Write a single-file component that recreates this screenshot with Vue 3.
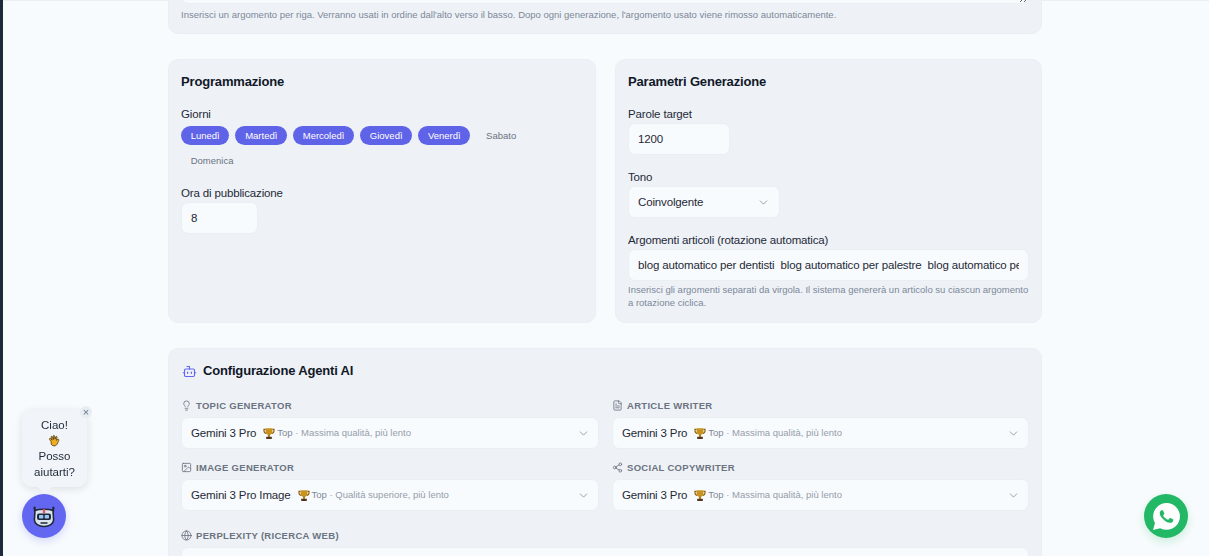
<script setup>
const days = [
  { n: 'Lunedì', on: true }, { n: 'Martedì', on: true }, { n: 'Mercoledì', on: true },
  { n: 'Giovedì', on: true }, { n: 'Venerdì', on: true }, { n: 'Sabato', on: false }, { n: 'Domenica', on: false }
]
const agents = [
  { label: 'TOPIC GENERATOR', icon: 'bulb', model: 'Gemini 3 Pro', note: 'Massima qualità, più lento' },
  { label: 'ARTICLE WRITER', icon: 'file', model: 'Gemini 3 Pro', note: 'Massima qualità, più lento' },
  { label: 'IMAGE GENERATOR', icon: 'image', model: 'Gemini 3 Pro Image', note: 'Qualità superiore, più lento' },
  { label: 'SOCIAL COPYWRITER', icon: 'share', model: 'Gemini 3 Pro', note: 'Massima qualità, più lento' }
]
const topics = 'blog automatico per dentisti  blog automatico per palestre  blog automatico per ristoranti  blog automatico per hotel'
</script>

<template>
  <div class="page">
    <div class="rail"></div>
    <main class="main">
      <div class="content">
        <section class="card top-card">
          <textarea class="area" readonly></textarea>
          <p class="hint top-hint">Inserisci un argomento per riga. Verranno usati in ordine dall'alto verso il basso. Dopo ogni generazione, l'argomento usato viene rimosso automaticamente.</p>
        </section>

        <div class="two">
          <section class="card sched">
            <h3 class="title">Programmazione</h3>
            <div class="label first">Giorni</div>
            <div class="pills">
              <span v-for="d in days" :key="d.n" class="pill" :class="{ on: d.on }">{{ d.n }}</span>
            </div>
            <div class="label ora">Ora di pubblicazione</div>
            <input class="field w-ora" value="8" readonly />
          </section>

          <section class="card params">
            <h3 class="title">Parametri Generazione</h3>
            <div class="label first">Parole target</div>
            <input class="field w-parole" value="1200" readonly />
            <div class="label gapped">Tono</div>
            <div class="field select w-tono">
              <span>Coinvolgente</span>
              <svg class="chev" viewBox="0 0 24 24"><path d="m6 9 6 6 6-6" /></svg>
            </div>
            <div class="label gapped">Argomenti articoli (rotazione automatica)</div>
            <input class="field wide" :value="topics" readonly />
            <p class="hint arg-hint">Inserisci gli argomenti separati da virgola. Il sistema genererà un articolo su ciascun argomento a rotazione ciclica.</p>
          </section>
        </div>

        <section class="card agents">
          <h3 class="title agent-title">
            <svg class="bot" viewBox="0 0 24 24"><path d="M12 8V4H8" /><rect width="16" height="12" x="4" y="8" rx="2" /><path d="M2 14h2" /><path d="M20 14h2" /><path d="M15 13v2" /><path d="M9 13v2" /></svg>
            Configurazione Agenti AI
          </h3>
          <div class="agent-grid">
            <div v-for="a in agents" :key="a.label" class="agent">
              <div class="agent-label">
                <svg class="ic" viewBox="0 0 24 24">
                  <template v-if="a.icon === 'bulb'"><path d="M15 14c.2-1 .7-1.7 1.5-2.5 1-.9 1.5-2.2 1.5-3.5A6 6 0 0 0 6 8c0 1 .2 2.2 1.5 3.5.7.7 1.3 1.5 1.5 2.5" /><path d="M9 18h6" /><path d="M10 22h4" /></template>
                  <template v-else-if="a.icon === 'file'"><path d="M15 2H6a2 2 0 0 0-2 2v16a2 2 0 0 0 2 2h12a2 2 0 0 0 2-2V7Z" /><path d="M14 2v4a2 2 0 0 0 2 2h4" /><path d="M10 9H8" /><path d="M16 13H8" /><path d="M16 17H8" /></template>
                  <template v-else-if="a.icon === 'image'"><rect width="18" height="18" x="3" y="3" rx="2" /><circle cx="9" cy="9" r="2" /><path d="m21 15-3.086-3.086a2 2 0 0 0-2.828 0L6 21" /></template>
                  <template v-else><circle cx="18" cy="5" r="3" /><circle cx="6" cy="12" r="3" /><circle cx="18" cy="19" r="3" /><path d="M8.59 13.51 15.42 17.49" /><path d="M15.41 6.51 8.59 10.49" /></template>
                </svg>
                {{ a.label }}
              </div>
              <div class="field select">
                <span class="model">
                  <span class="model-name">{{ a.model }}</span>
                  <svg class="trophy" viewBox="0 0 16 16">
                    <path d="M3.500 2.500H1.300v1.800c0 1.900 1.500 3.400 3.500 3.500M12.500 2.500h2.200v1.800c0 1.900-1.500 3.400-3.500 3.500" fill="none" stroke="#8a5a12" stroke-width="1.500" />
                    <path d="M3.400 1h9.200v4.400c0 2.800-2 4.600-4.600 4.600S3.400 8.200 3.400 5.400Z" fill="#c9941c" />
                    <rect x="6.800" y="9.500" width="2.400" height="3" fill="#9a6c12" />
                    <rect x="4.200" y="12.200" width="7.600" height="3" rx=".5" fill="#54361a" />
                  </svg>
                  <span class="note"><span class="top">Top</span> · {{ a.note }}</span>
                </span>
                <svg class="chev" viewBox="0 0 24 24"><path d="m6 9 6 6 6-6" /></svg>
              </div>
            </div>
          </div>
          <div class="agent-label perplexity">
            <svg class="ic" viewBox="0 0 24 24"><circle cx="12" cy="12" r="10" /><path d="M12 2a14.500 14.500 0 0 0 0 20 14.500 14.500 0 0 0 0-20" /><path d="M2 12h20" /></svg>
            PERPLEXITY (RICERCA WEB)
          </div>
          <div class="field select"></div>
        </section>
      </div>
    </main>

    <div class="chat">
      <div class="bubble">
        <button class="close">×</button>
        Ciao!<br />
        <svg class="wave" viewBox="0 0 16 16">
          <path d="M3.600 8.800 1.800 6.200c-.6-.9.6-1.800 1.300-.9L4.800 7 3.600 3.800c-.4-1.100 1.100-1.600 1.500-.5l1.200 2.900-.3-3.700c-.1-1.100 1.500-1.200 1.600-.1l.5 3.500.8-2.600c.4-1 1.800-.6 1.500.5l-.8 3.400 1.500-1c.9-.6 1.800.4 1.200 1.300-1 1.500-1 3.300-2.400 4.800-1.800 2-4.800 1.600-6.300-.7Z" fill="#efae1f" stroke="#4a3312" stroke-width=".9" />
        </svg><br />
        Posso<br />aiutarti?
      </div>
      <div class="avatar">
        <svg class="robot" viewBox="0 0 24 24">
          <path d="M2.500 3.500 3.500 10M21.500 3.500 20.500 10" stroke="#1e293b" stroke-width="2.200" stroke-linecap="round" fill="none" />
          <path d="M3 6.500C7 4.800 17 4.800 21 6.500l.6 9.500c0 3.500-4.300 6.500-9.600 6.500S2.400 19.500 2.400 16Z" fill="#dbe3ee" stroke="#1e293b" stroke-width="1.600" />
          <rect x="10.800" y="5.200" width="2.400" height="4" fill="#e25563" />
          <rect x="5" y="9.500" width="14" height="6.500" rx="2" fill="#1e293b" />
          <rect x="7" y="11" width="4.300" height="3.500" rx=".8" fill="#9cc4f5" />
          <rect x="12.700" y="11" width="4.300" height="3.500" rx=".8" fill="#9cc4f5" />
          <path d="M8.500 19h7" stroke="#1e293b" stroke-width="1.500" />
        </svg>
      </div>
    </div>

    <div class="wa">
      <svg viewBox="0 0 24 24">
        <path fill="#fff" d="M20.464 3.488A11.815 11.815 0 0 0 12.050 0C5.495 0 .16 5.335.157 11.892c0 2.096.547 4.142 1.588 5.945L.057 24l6.305-1.654a11.882 11.882 0 0 0 5.683 1.448h.005c6.554 0 11.890-5.335 11.893-11.893a11.821 11.821 0 0 0-3.480-8.413z" />
        <path fill="#22b865" d="M17.472 14.382c-.297-.149-1.758-.867-2.030-.967-.273-.099-.471-.148-.67.150-.197.297-.767.966-.94 1.164-.173.199-.347.223-.644.075-.297-.150-1.255-.463-2.390-1.475-.883-.788-1.480-1.761-1.653-2.059-.173-.297-.018-.458.130-.606.134-.133.298-.347.446-.520.149-.174.198-.298.298-.497.099-.198.050-.371-.025-.520-.075-.149-.669-1.612-.916-2.207-.242-.579-.487-.500-.669-.510-.173-.008-.371-.010-.570-.010-.198 0-.520.074-.792.372-.272.297-1.040 1.016-1.040 2.479 0 1.462 1.065 2.875 1.213 3.074.149.198 2.096 3.200 5.077 4.487.709.306 1.262.489 1.694.625.712.227 1.360.195 1.871.118.571-.085 1.758-.719 2.006-1.413.248-.694.248-1.289.173-1.413-.074-.124-.272-.198-.570-.347" />
      </svg>
    </div>
  </div>
</template>

<style>
html, body { margin: 0; height: 100%; overflow: hidden; background: #f8fbfd; }
</style>

<style scoped>
.page {
  display: flex;
  height: 556px;
  overflow: hidden;
  background: #f8fbfd;
  font-family: "Liberation Sans", Arial, sans-serif;
  color: #111827;
}
.rail { width: 3px; flex: none; background: #1e293b; }
.main { flex: 1; min-width: 0; border-top: 1px solid #eceff2; box-sizing: border-box; }
.content { width: 874px; margin: -61px 0 0 165px; display: flex; flex-direction: column; }

.card {
  background: #eef2f7;
  border: 1px solid #ebeff5;
  border-radius: 10px;
  box-sizing: border-box;
  padding: 12px;
}
.top-card { height: 94px; }
.area {
  display: block;
  width: 100%;
  height: 51px;
  box-sizing: border-box;
  border: 1px solid #eaeff4;
  border-radius: 7px;
  background: #f8fbfd;
  outline: none;
  margin: 0;
}
.hint { margin: 0; font-size: 9.5px; line-height: 13px; color: #7c8797; }
.top-hint { margin-top: 4px; }

.two { display: grid; grid-template-columns: 428px 427px; gap: 19px; margin-top: 25px; }
.sched, .params { height: 264px; }
.title { margin: 1px 0 0; font-size: 13px; line-height: 18px; font-weight: 700; letter-spacing: -.17px; color: #111827; }
.label { font-size: 11.5px; line-height: 14px; letter-spacing: -.15px; color: #1f2937; }
.first { margin-top: 16px; }
.pills { display: flex; flex-wrap: wrap; gap: 6px; margin-top: 5px; }
.pill {
  height: 19px;
  line-height: 19px;
  padding: 0 9.7px;
  border-radius: 10px;
  font-size: 9.5px;
  color: #6b7280;
}
.pill.on { background: #5f63e8; color: #fff; }
.ora { margin-top: 16px; }
.ora + .field { margin-top: 2px; }

.field {
  display: block;
  height: 32px;
  box-sizing: border-box;
  margin-top: 2px;
  padding: 0 9px;
  border: 1px solid #eaeff4;
  border-radius: 7px;
  background: #f8fbfd;
  font-family: inherit;
  font-size: 11.5px;
  letter-spacing: -.15px;
  line-height: 30px;
  color: #1f2937;
  outline: none;
}
.w-ora { width: 77px; }
.w-parole { width: 102px; }
.w-tono { width: 152px; }
.wide { width: 401px; }
.gapped { margin-top: 15px; }
.select { display: flex; align-items: center; justify-content: space-between; padding: 0 8px 0 9px; width: auto; }
.w-tono.select { width: 152px; padding-right: 9px; }
.chev { width: 13px; height: 13px; fill: none; stroke: #828c9a; stroke-width: 1.500; stroke-linecap: round; stroke-linejoin: round; }
.arg-hint { margin-top: 2px; }

.agents { margin-top: 25px; height: 240px; }
.agent-title { display: flex; align-items: center; gap: 6px; margin: 1px 0 0 1px; }
.bot { width: 15px; height: 15px; fill: none; stroke: #6366f1; stroke-width: 1.800; stroke-linecap: round; stroke-linejoin: round; }
.agent-grid { display: grid; grid-template-columns: 418px 417px; column-gap: 13px; row-gap: 11px; margin-top: 18px; }
.agent-label {
  display: flex;
  align-items: center;
  gap: 4px;
  height: 14px;
  font-size: 9.5px;
  font-weight: 700;
  letter-spacing: .3px;
  color: #6b7280;
}
.agent .field { margin-top: 5px; }
.ic { width: 11px; height: 11px; flex: none; fill: none; stroke: #6b7280; stroke-width: 1.800; stroke-linecap: round; stroke-linejoin: round; }
.model { display: flex; align-items: center; }
.model-name { font-size: 11.5px; color: #1f2937; }
.trophy { width: 12px; height: 13px; margin-left: 7px; margin-right: 2px; }
.note { font-size: 9.5px; letter-spacing: 0; color: #949daa; }
.top { color: #7f8997; }
.perplexity { margin-top: 17px; }
.perplexity + .field { margin-top: 5px; }

.chat { position: fixed; left: 22px; top: 410px; width: 66px; display: flex; flex-direction: column; }
.bubble {
  position: relative;
  box-sizing: border-box;
  width: 65px;
  height: 77px;
  padding: 8px 4px;
  background: #f1f5f9;
  border-radius: 10px;
  box-shadow: 0 2px 8px rgba(15, 23, 42, .12);
  font-size: 11.5px;
  line-height: 15.700px;
  text-align: center;
  color: #1f2937;
}
.bubble::after {
  content: "";
  position: absolute;
  left: 18px;
  bottom: -5px;
  width: 10px;
  height: 10px;
  background: #f1f5f9;
  transform: rotate(45deg);
}
.close {
  position: absolute;
  right: -5px;
  top: -4px;
  width: 12px;
  height: 12px;
  padding: 0;
  border: 0;
  border-radius: 50%;
  background: #e7edf3;
  color: #64748b;
  font: 11px/12px "Liberation Sans", sans-serif;
}
.wave { width: 14px; height: 14px; vertical-align: -3px; }
.avatar {
  width: 44px;
  height: 44px;
  margin-top: 7px;
  border-radius: 50%;
  background: #6366f1;
  box-shadow: 0 3px 8px rgba(99, 102, 241, .25);
  display: flex;
  align-items: center;
  justify-content: center;
}
.robot { width: 24px; height: 24px; }
.wa {
  position: fixed;
  left: 1144px;
  top: 494px;
  width: 44px;
  height: 44px;
  border-radius: 50%;
  background: #22b865;
  box-shadow: 0 4px 10px rgba(34, 184, 101, .2);
  display: flex;
  align-items: center;
  justify-content: center;
}
.wa svg { width: 27px; height: 27px; }
</style>
